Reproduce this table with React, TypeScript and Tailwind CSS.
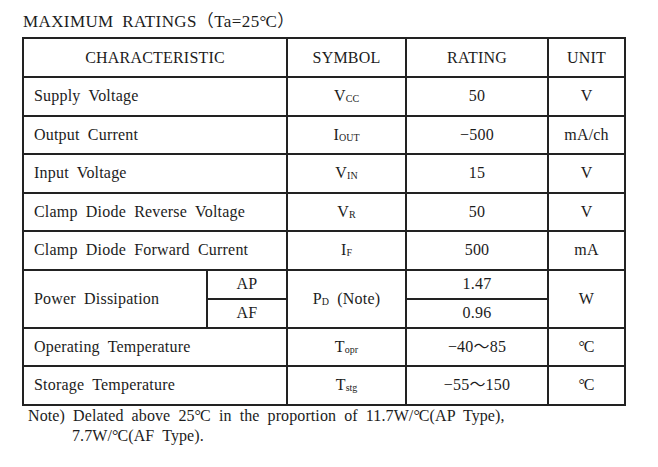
import React from 'react';

const cell = 'border-2 border-[#222] px-[10px] py-0 align-middle';

// degree Celsius drawn as °C in the serif face, set tight like the original ℃ glyph
const C = () => (
  <span className="whitespace-nowrap">
    <span className="mr-[-1px] tracking-normal">°</span>C
  </span>
);

const Sym = ({ base, sub }: { base: string; sub: string }) => (
  <span>
    {base}
    <span className="text-[10px] relative top-[1px] tracking-normal">{sub}</span>
  </span>
);

const rows: { name: string; sym: React.ReactNode; rating: string; unit: React.ReactNode }[] = [
  { name: 'Supply Voltage', sym: <Sym base="V" sub="CC" />, rating: '50', unit: 'V' },
  { name: 'Output Current', sym: <Sym base="I" sub="OUT" />, rating: '−500', unit: 'mA/ch' },
  { name: 'Input Voltage', sym: <Sym base="V" sub="IN" />, rating: '15', unit: 'V' },
  { name: 'Clamp Diode Reverse Voltage', sym: <Sym base="V" sub="R" />, rating: '50', unit: 'V' },
  { name: 'Clamp Diode Forward Current', sym: <Sym base="I" sub="F" />, rating: '500', unit: 'mA' },
];

const temps: { name: string; sym: React.ReactNode; rating: string; unit: React.ReactNode }[] = [
  { name: 'Operating Temperature', sym: <Sym base="T" sub="opr" />, rating: '−40～85', unit: <C /> },
  { name: 'Storage Temperature', sym: <Sym base="T" sub="stg" />, rating: '−55～150', unit: <C /> },
];

const App = () => {
  return (
    <div
      className="w-[658px] h-[467px] bg-white text-[#1c1c1c] pl-[22px] pt-[12px] text-[16px] [word-spacing:4px]"
      style={{ fontFamily: '"Liberation Serif", "Noto Sans CJK KR", serif' }}
    >
      <div className="h-[20px] leading-[20px] mb-[5px] pl-[1px] text-[17px] tracking-[0.4px]">
        MAXIMUM RATINGS（Ta=25<C />）
      </div>

      <table className="border-collapse table-fixed w-[602px] leading-none tracking-[0.2px]">
        <colgroup>
          <col className="w-[184px]" />
          <col className="w-[80px]" />
          <col className="w-[119px]" />
          <col className="w-[142px]" />
          <col className="w-[77px]" />
        </colgroup>
        <tbody>
          <tr className="h-[39px]">
            <td colSpan={2} className={`${cell} text-center`}>CHARACTERISTIC</td>
            <td className={`${cell} text-center`}>SYMBOL</td>
            <td className={`${cell} text-center`}>RATING</td>
            <td className={`${cell} text-center`}>UNIT</td>
          </tr>
          {rows.map((r, i) => (
            <tr key={i} className="h-[38.5px]">
              <td colSpan={2} className={cell}>{r.name}</td>
              <td className={`${cell} text-center`}>{r.sym}</td>
              <td className={`${cell} text-center`}>{r.rating}</td>
              <td className={`${cell} text-center`}>{r.unit}</td>
            </tr>
          ))}
          <tr className="h-[29px]">
            <td rowSpan={2} className={cell}>Power Dissipation</td>
            <td className={`${cell} text-center`}>AP</td>
            <td rowSpan={2} className={`${cell} text-center`}>
              <Sym base="P" sub="D" /> (Note)
            </td>
            <td className={`${cell} text-center`}>1.47</td>
            <td rowSpan={2} className={`${cell} text-center`}>W</td>
          </tr>
          <tr className="h-[29px]">
            <td className={`${cell} text-center`}>AF</td>
            <td className={`${cell} text-center`}>0.96</td>
          </tr>
          {temps.map((r, i) => (
            <tr key={i} className="h-[38.5px]">
              <td colSpan={2} className={cell}>{r.name}</td>
              <td className={`${cell} text-center`}>{r.sym}</td>
              <td className={`${cell} text-center`}>{r.rating}</td>
              <td className={`${cell} text-center`}>{r.unit}</td>
            </tr>
          ))}
        </tbody>
      </table>

      <div className="pl-[6px] leading-[20px] tracking-[0.1px]">
        <div>
          Note) Delated above 25<C /> in the proportion of 11.7W/<C />(AP Type),
        </div>
        <div className="pl-[44px]">
          7.7W/<C />(AF Type).
        </div>
      </div>
    </div>
  );
};

export default App;
